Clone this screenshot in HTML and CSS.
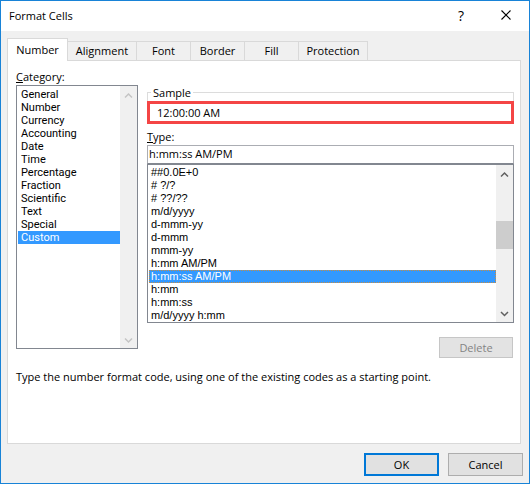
FILE: index.html
```html
<!DOCTYPE html>
<html>
<head>
<meta charset="utf-8">
<link rel="stylesheet" href="styles.css">
</head>
<body>
<div class="window">
  <div class="titlebar">
    <span class="title">Format Cells</span>
    <span class="help">?</span>
    <span class="close"><svg width="10" height="10" viewBox="0 0 10 10"><path d="M0.5 0.5 L9.5 9.5 M9.5 0.5 L0.5 9.5" stroke="#000" stroke-width="1.1" fill="none"/></svg></span>
  </div>
  <div class="body">
    <div class="tabs">
      <div class="tab active w-number">Number</div>
      <div class="tab w-align">Alignment</div>
      <div class="tab w-font">Font</div>
      <div class="tab w-border">Border</div>
      <div class="tab w-fill">Fill</div>
      <div class="tab w-prot">Protection</div>
    </div>
    <div class="panel">
      <div class="panel-grid">
        <div class="col-left">
          <div class="label"><u>C</u>ategory:</div>
          <div class="listbox cat">
            <div class="items">
              <div class="row">General</div>
              <div class="row">Number</div>
              <div class="row">Currency</div>
              <div class="row">Accounting</div>
              <div class="row">Date</div>
              <div class="row">Time</div>
              <div class="row">Percentage</div>
              <div class="row">Fraction</div>
              <div class="row">Scientific</div>
              <div class="row">Text</div>
              <div class="row">Special</div>
              <div class="row selected">Custom</div>
            </div>
            <div class="scrollbar disabled">
              <div class="sb-btn"><svg width="17" height="17" viewBox="0 0 17 17"><polyline points="5,11.5 8.5,8 12,11.5" fill="none" stroke-width="1.5"/></svg></div>
              <div class="sb-track"></div>
              <div class="sb-btn"><svg width="17" height="17" viewBox="0 0 17 17"><polyline points="5,7.5 8.5,11 12,7.5" fill="none" stroke-width="1.5"/></svg></div>
            </div>
          </div>
        </div>
        <div class="col-right">
          <div class="group-head"><span class="group-title">Sample</span></div>
          <div class="sample-box">12:00:00 AM</div>
          <div class="label type-label"><u>T</u>ype:</div>
          <div class="input">h:mm:ss AM/PM</div>
          <div class="listbox fmt">
            <div class="items">
              <div class="row">##0.0E+0</div>
              <div class="row"># ?/?</div>
              <div class="row"># ??/??</div>
              <div class="row">m/d/yyyy</div>
              <div class="row">d-mmm-yy</div>
              <div class="row">d-mmm</div>
              <div class="row">mmm-yy</div>
              <div class="row">h:mm AM/PM</div>
              <div class="row selected focus">h:mm:ss AM/PM</div>
              <div class="row">h:mm</div>
              <div class="row">h:mm:ss</div>
              <div class="row">m/d/yyyy h:mm</div>
            </div>
            <div class="scrollbar">
              <div class="sb-btn"><svg width="17" height="17" viewBox="0 0 17 17"><polyline points="5,11.5 8.5,8 12,11.5" fill="none" stroke-width="1.5"/></svg></div>
              <div class="sb-track"><div class="sb-thumb"></div></div>
              <div class="sb-btn"><svg width="17" height="17" viewBox="0 0 17 17"><polyline points="5,7 8.5,10.5 12,7" fill="none" stroke-width="1.5"/></svg></div>
            </div>
          </div>
          <div class="delete-row"><div class="btn disabled-btn">Delete</div></div>
        </div>
      </div>
      <p class="help-text">Type the number format code, using one of the existing codes as a starting point.</p>
    </div>
    <div class="buttons">
      <div class="btn default">OK</div>
      <div class="btn">Cancel</div>
    </div>
  </div>
</div>
</body>
</html>
```
FILE: styles.css
```css
* { box-sizing: border-box; }
html, body { margin: 0; padding: 0; }
body {
  font-family: "Open Sans", "Noto Sans", sans-serif;
  font-size: 11px;
  color: #000;
  background: #fff;
}
.window {
  width: 530px;
  height: 484px;
  border: 1px solid #1883d7;
  display: flex;
  flex-direction: column;
  background: #f0f0f0;
}
.titlebar {
  height: 30px;
  background: #fff;
  display: flex;
  align-items: center;
  padding-left: 8px;
  flex: none;
}
.title { flex: 1; line-height: 30px; font-size: 11px; }
.help {
  width: 30px;
  text-align: center;
  font-size: 14px;
  line-height: 30px;
  margin-right: 7px;
  margin-top: -1px;
}
.close {
  width: 46px;
  height: 30px;
  display: flex;
  align-items: center;
  justify-content: center;
  padding-bottom: 3px;
}
.body {
  flex: 1;
  padding: 7px 8px 0 6px;
  display: flex;
  flex-direction: column;
}
.tabs {
  display: flex;
  align-items: flex-end;
  height: 22px;
  position: relative;
  z-index: 1;
}
.tab {
  height: 19px;
  line-height: 18px;
  text-align: center;
  background: #f0f0f0;
  border-top: 1px solid #d9d9d9;
  border-right: 1px solid #d9d9d9;
}
.tab.active {
  height: 23px;
  line-height: 22px;
  margin-bottom: -1px;
  background: #fff;
  border-left: 1px solid #d9d9d9;
}
.w-number { width: 61px; }
.w-align { width: 69px; }
.w-font { width: 54px; }
.w-border { width: 54px; }
.w-fill { width: 54px; }
.w-prot { width: 69px; }
.panel {
  width: 514px;
  height: 384px;
  background: #fff;
  border: 1px solid #d9d9d9;
  padding: 8px 6px 0 8px;
  flex: none;
}
.panel-grid {
  display: grid;
  grid-template-columns: 122px 367px;
  column-gap: 9px;
  align-items: start;
}
.label { line-height: 15px; height: 15px; }
.col-left .listbox { margin-top: 1px; }
.listbox {
  border: 1px solid #828790;
  display: flex;
  background: #fff;
  overflow: hidden;
}
.listbox.cat { height: 264px; }
.listbox.fmt { height: 159px; }
.items { flex: 1; padding-left: 1px; overflow: hidden; }
.cat .items { padding-top: 2px; }
.fmt .items { padding-top: 1px; }
.row {
  height: 13px;
  line-height: 13px;
  padding-left: 3px;
  white-space: nowrap;
}
.cat .row {
  font-family: Roboto, "Open Sans", sans-serif;
  font-size: 11px;
}
.fmt .row {
  font-family: "Liberation Sans", Arial, sans-serif;
  font-size: 11px;
  padding-left: 2px;
}
.row.selected { background: #3399ff; color: #fff; }
.row.focus { outline: 1px dotted #c98c40; outline-offset: -1px; }
.scrollbar {
  width: 17px;
  background: #f0f0f0;
  display: flex;
  flex-direction: column;
  flex: none;
}
.sb-btn { height: 17px; flex: none; }
.sb-btn svg { display: block; stroke: #606060; }
.scrollbar.disabled .sb-btn svg { stroke: #c4c4c4; }
.sb-track { flex: 1; }
.sb-thumb {
  margin-top: 39px;
  height: 28px;
  background: #cdcdcd;
}
.col-right { padding-top: 23px; }
.group-head {
  height: 9px;
  border-top: 1px solid #dcdcdc;
  border-left: 1px solid #dcdcdc;
  border-right: 1px solid #dcdcdc;
  display: flex;
}
.group-title {
  margin-top: -8px;
  margin-left: 3px;
  padding: 0 2px;
  height: 15px;
  line-height: 15px;
  background: #fff;
}
.sample-box {
  height: 23px;
  border: 3px solid #f44545;
  line-height: 17px;
  padding-left: 7px;
}
.type-label { margin-top: 5px; }
.input {
  margin-top: 1px;
  height: 19px;
  border: 1px solid #abadb3;
  border-bottom-color: #828790;
  line-height: 16px;
  padding-left: 1px;
}
.delete-row {
  margin-top: 14px;
  display: flex;
  justify-content: flex-end;
  padding-right: 1px;
}
.btn {
  width: 75px;
  height: 23px;
  line-height: 21px;
  text-align: center;
  background: #e1e1e1;
  border: 1px solid #adadad;
}
.disabled-btn {
  width: 74px;
  height: 21px;
  line-height: 19px;
  color: #838383;
  background: #e3e3e3;
  border-color: #c6c6c6;
}
.help-text {
  margin: 11px 0 0 0;
  line-height: 15px;
}
.buttons {
  margin-top: 9px;
  margin-right: -2px;
  display: flex;
  justify-content: flex-end;
  gap: 9px;
}
.btn.default {
  border: 2px solid #0078d7;
  line-height: 19px;
}
```
